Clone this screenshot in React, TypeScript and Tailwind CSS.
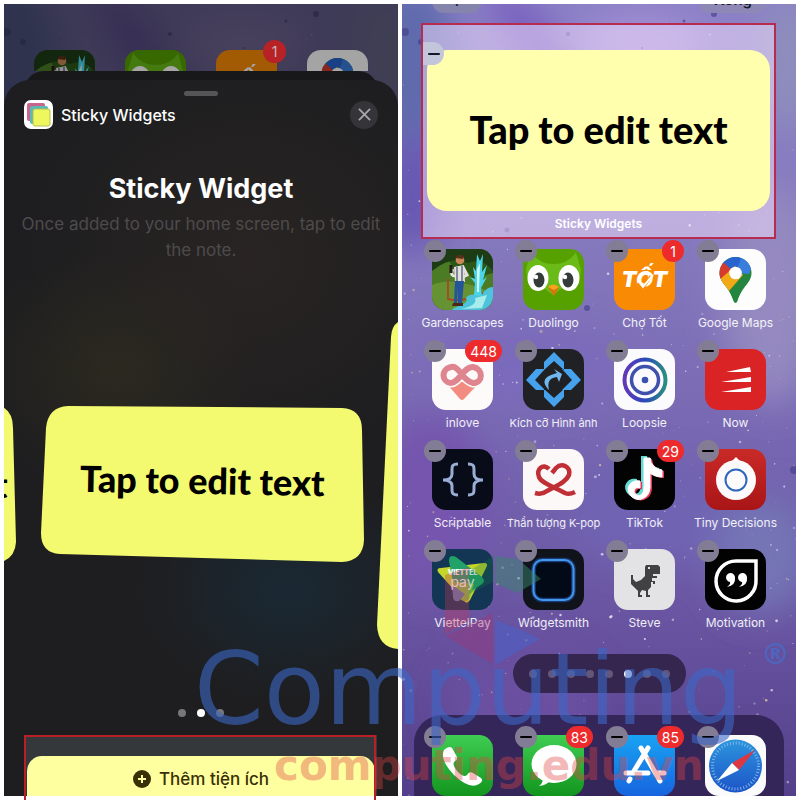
import type { ReactNode } from "react";

type AppInfo = { name: string; icon: ReactNode; badge?: string; small?: boolean };

const note = "Tap to edit text";

function seeded(seed: number) {
  let s = seed;
  return () => {
    s = (s * 16807) % 2147483647;
    return s / 2147483647;
  };
}

const random = seeded(77);
const stars = Array.from({ length: 420 }, () => {
  const y = Math.pow(random(), 0.65) * 792;
  return { x: random() * 394, y, r: 0.4 + random() * random() * 1.4, o: 0.3 + random() * 0.6 };
});
const specks = [
  [3, 28, 4], [19, 38, 3], [166, 30, 2], [312, 10, 3], [282, 17, 1.5], [105, 226, 2.5], [185, 304, 3], [392, 466, 4], [240, 44, 1],
];

function Wallpaper() {
  return (
    <svg aria-hidden="true" className="absolute inset-0 h-full w-full" viewBox="0 0 394 792" preserveAspectRatio="none">
      <defs>
        <linearGradient id="sky" x1="0" y1="0" x2="0" y2="1">
          <stop offset="0" stopColor="#8b80c6" />
          <stop offset=".3" stopColor="#8579bd" />
          <stop offset=".55" stopColor="#7767b2" />
          <stop offset=".8" stopColor="#67529f" />
          <stop offset="1" stopColor="#543f8a" />
        </linearGradient>
        <filter id="haze" x="-50%" y="-50%" width="200%" height="200%"><feGaussianBlur stdDeviation="18" /></filter>
      </defs>
      <rect width="394" height="792" fill="url(#sky)" />
      <g filter="url(#haze)">
        <ellipse cx="10" cy="60" rx="45" ry="90" fill="#5e6aac" />
        <ellipse cx="140" cy="50" rx="18" ry="90" fill="#7559bd" transform="rotate(-35 140 50)" />
        <ellipse cx="10" cy="190" rx="35" ry="60" fill="#6656b2" />
        <ellipse cx="240" cy="40" rx="60" ry="25" fill="#a993d9" />
        <ellipse cx="370" cy="290" rx="50" ry="110" fill="#9489c0" />
        <ellipse cx="385" cy="60" rx="25" ry="70" fill="#8f90bb" />
        <ellipse cx="120" cy="360" rx="100" ry="40" fill="#7a6bbb" />
        <ellipse cx="30" cy="500" rx="60" ry="90" fill="#7554ad" />
        <ellipse cx="250" cy="510" rx="90" ry="50" fill="#7063b2" />
        <ellipse cx="360" cy="550" rx="50" ry="60" fill="#7474b6" />
        <ellipse cx="120" cy="700" rx="80" ry="60" fill="#6a4fa0" />
      </g>
      {specks.map(([x, y, r]) => <circle key={x} cx={x} cy={y} r={r} fill="#3f3a8b" opacity=".6" />)}
      {stars.map((s, i) => <circle key={i} cx={s.x} cy={s.y} r={s.r} fill={i % 5 ? "#e6dff5" : "#d9c5a4"} opacity={s.o} />)}
    </svg>
  );
}

const Garden = () => (
  <svg viewBox="0 0 61 61" className="h-full w-full">
    <rect width="61" height="61" fill="#2c5719" />
    <path d="M0 14Q16 2 22 22Q32 12 40 30L61 24V61H0Z" fill="#4b7b24" />
    <path d="M0 0H61V22Q50 8 36 14Q20 6 0 22Z" fill="#1d3c15" />
    <path d="M0 36Q20 26 61 44V61H0Z" fill="#659233" />
    <path d="M16 30V50Q30 54 50 44Q57 50 46 57" fill="none" stroke="#b33c22" strokeWidth="1.6" />
    <path d="M22 59Q38 53 34 50Q34 44 50 46Q54 38 61 38V61H20Z" fill="#4cc5dc" />
    <path d="M28 60Q46 57 43 49L55 46L50 59Z" fill="#a8ecec" />
    <path d="M42 46L43 34L38 28L43 30L41 18L44 22L45 5L48 12L51 5L50 23L55 16L51 31L55 28L49 39L50 47Z" fill="#4bd5e8" />
    <path d="M45 43L45 20L48 14L47 43Z" fill="#cafafa" />
    <circle cx="28" cy="11" r="4.3" fill="#c98758" />
    <path d="M23 9Q25 4 32 7L31 10Z" fill="#593018" />
    <path d="M22 18L32 16L33 33H23Z" fill="#e4e0dc" />
    <path d="M21 20Q17 28 25 27M31 18L35 26L29 29" fill="none" stroke="#e4e0dc" strokeWidth="3" />
    <path d="M25 18V32M30 17V32" stroke="#536382" strokeWidth="1.4" />
    <path d="M23 32H32L30 54H26V38L25 54H22Z" fill="#25549b" />
    <path d="M21 54H31V57H20Z" fill="#4d2816" />
    <path d="M19 16V24" stroke="#241c16" strokeWidth="3" />
  </svg>
);
const Owl = () => (
  <svg viewBox="0 0 61 61" className="h-full w-full">
    <rect width="61" height="61" fill="#56a000" />
    <path d="M8 3Q16 15 30 15Q46 15 53 3L58 21Q58 34 42 37L30 46L18 37Q3 34 3 20Z" fill="#6abb18" />
    <ellipse cx="15" cy="29" rx="10.5" ry="13" fill="#fff" /><ellipse cx="46" cy="29" rx="10.5" ry="13" fill="#fff" />
    <ellipse cx="16" cy="31" rx="5.5" ry="7.5" fill="#353b38" /><ellipse cx="45" cy="31" rx="5.5" ry="7.5" fill="#353b38" />
    <circle cx="13" cy="28" r="2.2" fill="#fff" /><circle cx="42" cy="28" r="2.2" fill="#fff" />
    <path d="M25 38Q30 34 36 38L31 47Z" fill="#df730b" /><path d="M25 38Q30 33 36 38L31 41Z" fill="#f7a51d" />
  </svg>
);
const Tot = () => (
  <div className="relative flex h-full w-full items-center justify-center bg-[#f98b04] font-[Inter] text-[22px] font-black text-white italic">
    <span>TỐT</span>
    <svg viewBox="0 0 61 61" className="absolute inset-0"><path d="M24 34L29 39L37 27" fill="none" stroke="#f98b04" strokeWidth="3" /><path d="M25 33L29 38L39 26" fill="none" stroke="#fff" strokeWidth="2" /></svg>
  </div>
);
const Maps = () => (
  <svg viewBox="0 0 61 61" className="h-full w-full">
    <defs><clipPath id="pin"><path d="M30.500 8A16 16 0 0 1 46.500 24C46.500 34 37 37 32.500 52Q30.500 56 28.500 52C24 37 14.500 34 14.500 24A16 16 0 0 1 30.500 8Z" /></clipPath></defs>
    <rect width="61" height="61" fill="#fdfdfd" />
    <g clipPath="url(#pin)"><rect width="61" height="61" fill="#24853f" /><path d="M10 4H44L48 16L30 24L16 15Z" fill="#2864ce" /><path d="M9 10L18 13L30 24L18 37L10 30Z" fill="#d43b2d" /><path d="M12 33L30 17L38 26L23 43Z" fill="#f2a916" /><path d="M37 6L48 15L44 25L31 24Z" fill="#397edc" /></g>
    <circle cx="30.500" cy="24" r="6.300" fill="#fff" />
  </svg>
);
const Inlove = () => (
  <svg viewBox="0 0 61 61" className="h-full w-full">
    <rect width="61" height="61" fill="#fdfafa" />
    <path d="M14 34Q20 38 30 28Q43 39 47 34L32 50Q30 52 28 50Z" fill="#f28c80" />
    <path d="M30 26C25 18 22 17 19 18C9 20 9 33 19 34C27 34 32 17 41 18C52 20 51 34 41 34C36 33 34 30 30 26" fill="none" stroke="#fdfafa" strokeWidth="9" />
    <path d="M30 26C25 18 22 17 19 18C9 20 9 33 19 34C27 34 32 17 41 18C52 20 51 34 41 34C36 33 34 30 30 26" fill="none" stroke="#df8590" strokeWidth="6" />
  </svg>
);
const Resize = () => (
  <svg viewBox="0 0 61 61" className="h-full w-full">
    <rect width="61" height="61" fill="#202124" />
    <path d="M31 3L41 13V21L31 12L21 21V13ZM31 58L41 48V40L31 49L21 40V48ZM3 31L13 20H22L12 31L22 41H13ZM58 31L48 20H39L49 31L39 41H48Z" fill="#46a2ed" />
    <path d="M26 41Q16 31 28 26L34 24L31 20L39 25L36 33L34 28Q23 29 26 41Z" fill="#6fb7ee" />
  </svg>
);
const Loopsie = () => (
  <svg viewBox="0 0 61 61" className="h-full w-full">
    <defs><linearGradient id="loop"><stop stopColor="#6238b9" /><stop offset=".5" stopColor="#2c48ba" /><stop offset="1" stopColor="#2a8d82" /></linearGradient></defs>
    <rect width="61" height="61" fill="#fbfbfe" />
    <circle cx="31" cy="31" r="20.500" fill="none" stroke="url(#loop)" strokeWidth="4" /><circle cx="31" cy="31" r="13.500" fill="none" stroke="#4050ae" strokeWidth="3.500" /><circle cx="31" cy="31" r="3.300" fill="#3953ad" />
  </svg>
);
const Now = () => (
  <svg viewBox="0 0 61 61" className="h-full w-full"><rect width="61" height="61" fill="#d92324" /><path d="M21 23L45 18L46 23ZM16 33L46 28V33ZM16 43L46 38V43Z" fill="#fff" /></svg>
);
const Script = () => (
  <svg viewBox="0 0 61 61" className="h-full w-full">
    <rect width="61" height="61" fill="#080b18" />
    <path d="M26 15C19 15 20 18 20 25C20 30 16 31 11 31C16 31 20 32 20 37C20 43 19 46 26 46M36 15C43 15 42 18 42 25C42 30 46 31 51 31C46 31 42 32 42 37C42 43 43 46 36 46" fill="none" stroke="#9aaed5" strokeWidth="3" />
  </svg>
);
const Kpop = () => (
  <svg viewBox="0 0 61 61" className="h-full w-full">
    <rect width="61" height="61" fill="#fcf8f8" />
    <path d="M26 20C20 14 13 20 16 28C18 34 33 39 42 44Q46 46 52 43M12 44Q19 46 24 42C35 36 43 33 46 26C48 18 39 13 33 19L29 24" fill="none" stroke="#c12f36" strokeWidth="4.500" />
  </svg>
);
const TikTok = () => {
  const d = "M35 8V37C35 49 22 53 16 46C9 38 16 29 25 31V38C19 36 17 43 22 45C26 47 29 43 29 37V8H35Q36 18 47 20V27Q39 27 34 22";
  return (
    <svg viewBox="0 0 61 61" className="h-full w-full"><rect width="61" height="61" fill="#030303" /><path d={d} transform="translate(-2 -1)" fill="#65d9d3" /><path d={d} transform="translate(3 2)" fill="#e53657" /><path d={d} transform="translate(1 1)" fill="#fff" stroke="#fff" /></svg>
  );
};
const Tiny = () => (
  <svg viewBox="0 0 61 61" className="h-full w-full">
    <defs><linearGradient id="tiny" x2="0" y2="1"><stop stopColor="#c92a27" /><stop offset="1" stopColor="#a91517" /></linearGradient></defs>
    <rect width="61" height="61" fill="url(#tiny)" /><path d="M25 14L31 8L37 14" fill="#fff" /><circle cx="31" cy="31" r="20" fill="#fcfafa" /><circle cx="31" cy="31" r="10.500" fill="none" stroke="#2d68bd" strokeWidth="2" />
  </svg>
);
const Viettel = () => (
  <div className="relative h-full w-full bg-[#123654]">
    <svg viewBox="0 0 61 61" className="absolute inset-0">
      <path d="M6 23Q4 19 9 19L52 14Q57 14 54 19L38 51Q35 56 32 52Z" fill="#c4d62a" />
      <path d="M17 12Q17 5 24 8L50 28Q54 32 50 35L31 48L24 49Z" fill="#22a269" />
      <path d="M20 32L42 35L38 49Q34 54 29 51Z" fill="#84bd41" /><path d="M20 36L33 45L27 52Q21 53 21 48Z" fill="#5e7cab" />
    </svg>
    <div className="relative pt-[20px] text-center font-[Inter] text-[7px] leading-[7px] font-black text-white">VIETTEL</div>
    <div className="relative text-center font-[Inter] text-[14px] leading-[11px] text-white">pay</div>
  </div>
);
const Smith = () => (
  <svg viewBox="0 0 61 61" className="h-full w-full"><rect width="61" height="61" fill="#101319" /><rect x="10.500" y="11" width="40" height="40" rx="9" fill="#030a17" stroke="#163a77" strokeWidth="4.500" /><rect x="10.500" y="11" width="40" height="40" rx="9" fill="none" stroke="#4597ec" strokeWidth="2" /></svg>
);
const Dino = () => (
  <svg viewBox="0 0 61 61" className="h-full w-full">
    <rect width="61" height="61" fill="#e3e2e4" />
    <path d="M32 16H44L46 18V25H39V27H43V29H38V32H41V35H39V33H37V38L34 41V46H36V48H32V42L28 41L26 44V46H28V48H24V42L20 38L17 35V26H19V30L22 33L27 31L31 27V18Z" fill="#414143" /><rect x="34" y="18" width="2" height="2" fill="#e3e2e4" />
  </svg>
);
const Motivation = () => (
  <svg viewBox="0 0 61 61" className="h-full w-full">
    <rect width="61" height="61" fill="#020202" /><path d="M31 12H51V31A20 20 0 1 1 31 12Z" fill="none" stroke="#fff" strokeWidth="3.500" />
    <path d="M30 29A4.500 4.500 0 1 0 25 33Q26 35 22 38Q31 36 30 29ZM42 29A4.500 4.500 0 1 0 37 33Q38 35 34 38Q43 36 42 29Z" fill="#fff" />
  </svg>
);
const Phone = () => (
  <svg viewBox="0 0 61 61" className="h-full w-full">
    <defs><linearGradient id="green" x2="0" y2="1"><stop stopColor="#3fcd52" /><stop offset="1" stopColor="#12951e" /></linearGradient></defs>
    <rect width="61" height="61" fill="url(#green)" /><path d="M12 15Q17 10 20 13L25 22Q26 25 22 27Q20 30 26 37Q32 43 35 40Q37 36 41 38L49 43Q52 46 47 49Q38 55 22 40Q7 24 12 15Z" fill="#fff" />
  </svg>
);
const Messages = () => (
  <svg viewBox="0 0 61 61" className="h-full w-full"><rect width="61" height="61" fill="url(#green)" /><ellipse cx="31" cy="29" rx="22.500" ry="19" fill="#fff" /><path d="M19 42Q21 48 16 51Q25 50 28 44Z" fill="#fff" /></svg>
);
const Store = () => (
  <svg viewBox="0 0 61 61" className="h-full w-full">
    <defs><linearGradient id="store" x2="0" y2="1"><stop stopColor="#18a3f3" /><stop offset="1" stopColor="#1764de" /></linearGradient></defs>
    <rect width="61" height="61" fill="url(#store)" /><path d="M34 13L20 36M16 44L15 46M27 13L46 46M12 38H34M43 38H50" stroke="#fff" strokeWidth="5" strokeLinecap="round" />
  </svg>
);
const Safari = () => (
  <svg viewBox="0 0 61 61" className="h-full w-full">
    <defs><linearGradient id="safari" x2="0" y2="1"><stop stopColor="#2c95dd" /><stop offset="1" stopColor="#1d54c8" /></linearGradient></defs>
    <rect width="61" height="61" fill="#fbfbfb" /><circle cx="30.500" cy="31" r="26.500" fill="url(#safari)" />
    <circle cx="30.500" cy="31" r="23" fill="none" stroke="#7fb5e8" strokeWidth="3" strokeDasharray="1 2" />
    <path d="M50 15L34 35L27 28Z" fill="#df3740" /><path d="M27 28L34 35L12 46Z" fill="#fff" />
  </svg>
);

const apps: AppInfo[] = [
  { name: "Gardenscapes", icon: <Garden /> },
  { name: "Duolingo", icon: <Owl /> },
  { name: "Chợ Tốt", icon: <Tot />, badge: "1" },
  { name: "Google Maps", icon: <Maps /> },
  { name: "inlove", icon: <Inlove />, badge: "448" },
  { name: "Kích cỡ Hình ảnh", icon: <Resize />, small: true },
  { name: "Loopsie", icon: <Loopsie /> },
  { name: "Now", icon: <Now /> },
  { name: "Scriptable", icon: <Script /> },
  { name: "Thần tượng K-pop", icon: <Kpop />, small: true },
  { name: "TikTok", icon: <TikTok />, badge: "29" },
  { name: "Tiny Decisions", icon: <Tiny /> },
  { name: "ViettelPay", icon: <Viettel /> },
  { name: "Widgetsmith", icon: <Smith /> },
  { name: "Steve", icon: <Dino /> },
  { name: "Motivation", icon: <Motivation /> },
];

const dock: AppInfo[] = [
  { name: "Phone", icon: <Phone /> },
  { name: "Messages", icon: <Messages />, badge: "83" },
  { name: "App Store", icon: <Store />, badge: "85" },
  { name: "Safari", icon: <Safari /> },
];

function Minus() {
  return (
    <button aria-label="Remove" className="absolute -top-[9px] -left-2 flex size-[22px] items-center justify-center rounded-full bg-[#827d94]">
      <span className="h-[2px] w-3 rounded-full bg-black" />
    </button>
  );
}

function AppIcon({ app }: { app: AppInfo }) {
  return (
    <div className="relative size-[61px]">
      <button aria-label={app.name} className="block size-[61px] overflow-hidden rounded-[14px]">{app.icon}</button>
      <Minus />
      {app.badge && (
        <span className="absolute -top-[9px] -right-[9px] flex h-[22px] min-w-[22px] items-center justify-center rounded-full bg-[#ee2b2c] px-[5px] text-[14px] text-white">{app.badge}</span>
      )}
    </div>
  );
}

function NoteCard({ shape, className, textClass, text = true }: { shape: ReactNode; className: string; textClass?: string; text?: boolean }) {
  return (
    <div className={`relative flex shrink-0 items-center ${className}`}>
      {shape}
      {text && <p className={`relative font-[Lato] text-[36px] leading-none font-black whitespace-nowrap text-black ${textClass}`}>{note}</p>}
    </div>
  );
}

function Gallery() {
  return (
    <section className="relative mt-1 ml-1 h-[calc(100vh-8px)] overflow-hidden bg-[#37375a]">
      <div className="absolute inset-0"><Wallpaper /></div>
      <div className="absolute inset-0 bg-[#16161b]/65" />
      <div className="relative flex h-[67px] justify-between overflow-hidden px-[30px] pt-[46px]">
        {apps.slice(0, 4).map((app) => (
          <div key={app.name} className="relative size-[61px]">
            <div className="size-[61px] overflow-hidden rounded-[14px] brightness-65">{app.icon}</div>
            {app.badge && <span className="absolute -top-[10px] -right-[9px] flex size-[23px] items-center justify-center rounded-full bg-[#b82227] text-[14px] text-[#c7b8b8]">{app.badge}</span>}
          </div>
        ))}
      </div>
      <div className="relative mx-5 h-8 rounded-t-[20px] bg-[#18181a]" />
      <div className="relative -mt-[23px] flex h-full flex-col rounded-t-[26px] bg-[#1e1e20] bg-[radial-gradient(ellipse_150px_110px_at_72%_510px,#1a2934,transparent),radial-gradient(ellipse_140px_120px_at_28%_290px,#2b291f,transparent),radial-gradient(ellipse_220px_200px_at_62%_180px,#292423,transparent)]">
        <div className="mx-auto mt-[11px] h-[5px] w-[34px] rounded-full bg-[#555557]" />
        <header className="mt-1 flex h-[29px] items-center px-5">
          <svg viewBox="0 0 29 29" className="size-[29px]">
            <rect width="29" height="29" rx="7" fill="#fff" /><rect x="3" y="3" width="18" height="18" rx="2" fill="#c9648a" /><rect x="6" y="6" width="18" height="18" rx="2" fill="#5abab7" /><rect x="9" y="9" width="17" height="17" rx="2" fill="#eff75e" stroke="#b5bd53" />
          </svg>
          <h2 className="ml-2 text-[16px] font-medium text-white">Sticky Widgets</h2>
          <button aria-label="Close" className="ml-auto flex size-7 items-center justify-center rounded-full bg-[#353539]">
            <svg viewBox="0 0 14 14" className="size-[13px]"><path d="M1 1L13 13M13 1L1 13" stroke="#a6a6aa" strokeWidth="2" /></svg>
          </button>
        </header>
        <h1 className="mt-[42px] text-center text-[27px] leading-9 font-bold text-white">Sticky Widget</h1>
        <p className="mx-auto mt-1 max-w-[370px] text-center text-[17px] leading-[26px] text-[#4e4b4c]">Once added to your home screen, tap to edit the note.</p>
        <div className="mt-[56px] flex h-[330px] items-center justify-center gap-3">
          <NoteCard className="mr-3 h-[160px] w-[310px] justify-end" textClass="pr-2 pb-1 rotate-1"
            shape={<svg viewBox="0 0 310 160" className="absolute inset-0"><path d="M20 0H284Q307 1 307 24L310 138Q309 158 286 160H20Z" fill="#f3fa6f" /></svg>} />
          <NoteCard className="h-[156px] w-[324px] justify-center" textClass="pb-2 rotate-1"
            shape={<svg viewBox="0 0 324 156" className="absolute inset-0"><path d="M28 0L302 2Q322 3 322 24L324 134Q323 155 302 156L20 148Q1 147 1 127L6 22Q8 1 28 0Z" fill="#f3fa6f" /></svg>} />
          <NoteCard className="h-[330px] w-[320px]" text={false}
            shape={<svg viewBox="0 0 320 330" className="absolute inset-0"><path d="M320 0H32Q16 1 15 18L1 306Q2 329 23 330H320Z" fill="#f3fa6f" /></svg>} />
        </div>
        <div className="mt-[60px] flex justify-center gap-[11px]">
          <span className="size-2 rounded-full bg-[#77777a]" /><span className="size-2 rounded-full bg-white" /><span className="size-2 rounded-full bg-[#77777a]" />
        </div>
        <div className="mx-[21px] mt-[18px] bg-[#34383a] px-[2px] pt-[21px]">
          <button className="flex h-[60px] w-full justify-center gap-2 rounded-[15px] bg-[#feff9f] pt-[10px] text-[17px] leading-[26px] font-medium text-[#393006]">
            <svg viewBox="0 0 18 18" className="mt-1 size-[18px]"><circle cx="9" cy="9" r="9" fill="#393006" /><path d="M9 5V13M5 9H13" stroke="#feff9f" strokeWidth="2" /></svg>
            Thêm tiện ích
          </button>
        </div>
      </div>
    </section>
  );
}

function HomeScreen() {
  return (
    <section className="relative mt-1 mr-1 h-[calc(100vh-8px)] overflow-hidden">
      <Wallpaper />
      <div className="relative flex h-[19px] items-start justify-between overflow-hidden pr-[28px] pl-[30px]">
        <button aria-label="Add widget" className="-mt-[15px] flex h-6 w-[50px] items-start justify-center rounded-full bg-[#8584ac] text-[16px] leading-6 font-semibold text-[#20203a]"><span>+</span></button>
        <button className="-mt-[17px] h-[26px] rounded-full bg-[#8d88b5] px-4 text-[15px] leading-[26px] font-semibold text-[#17172a]">Xong</button>
      </div>
      <div className="relative mr-5 ml-[19px] h-[216px] border-2 border-[#b82b50] bg-[#f5e4ff]/50 px-1 pt-[25px]">
        <div className="relative flex h-[161px] items-center justify-center rounded-[20px] bg-[#ffffae]">
          <p className="pb-1 font-[Lato] text-[38px] leading-none font-black whitespace-nowrap text-black">{note}</p>
          <button aria-label="Remove widget" className="absolute -top-[8px] -left-[4px] flex h-[23px] w-[21px] items-center justify-center rounded-r-full bg-[#c3c5da]"><span className="h-[2px] w-3 rounded-full bg-[#15152c]" /></button>
        </div>
        <p className="mt-[4px] text-center text-[12px] leading-[18px] font-semibold text-white">Sticky Widgets</p>
      </div>
      <div className="relative mt-[10px] grid grid-cols-[repeat(4,61px)] justify-between gap-y-[10px] px-[30px]">
        {apps.map((app) => (
          <div key={app.name} className="flex h-[90px] flex-col items-center">
            <AppIcon app={app} />
            <span className={`mt-[3px] leading-[20px] whitespace-nowrap text-white/90 ${app.small ? "text-[11px]" : "text-[12px]"}`}>{app.name}</span>
          </div>
        ))}
      </div>
      <div className="relative mx-auto mt-[15px] flex h-[39px] w-[173px] items-center justify-center gap-[11px] rounded-full bg-[#35264f]">
        {Array.from({ length: 8 }, (_, i) => <span key={i} className={`size-2 rounded-full ${i === 5 ? "bg-white" : "bg-[#625779]"}`} />)}
      </div>
      <div className="relative mx-3 mt-[22px] flex h-[110px] justify-between rounded-t-[28px] bg-[#35265a] px-[18px] pt-[20px]">
        {dock.map((app) => <AppIcon key={app.name} app={app} />)}
      </div>
    </section>
  );
}

export default function App() {
  return (
    <main className="relative grid h-screen grid-cols-2 gap-1 overflow-hidden bg-white font-[Inter,'Noto_Sans',sans-serif]">
      <Gallery />
      <HomeScreen />
      <div className="pointer-events-none absolute top-[735px] left-6 h-20 w-[352px] border-2 border-[#b91f27]" />
      <svg aria-hidden="true" viewBox="0 0 100 112" className="pointer-events-none absolute top-[555px] left-[442px] w-[100px]">
        <path d="M3 20L27 12V66L3 79Z" fill="#c53657" opacity=".35" /><path d="M27 16L51 1V27L27 39Z" fill="#167447" opacity=".3" />
        <path d="M53 1L76 4L99 24L75 38L53 28Z" fill="#39866c" opacity=".5" /><path d="M3 81L51 58V109Z" fill="#a03475" opacity=".4" /><path d="M53 65L75 73L98 84L53 110Z" fill="#4962c9" opacity=".55" />
      </svg>
      <p aria-hidden="true" className="pointer-events-none absolute top-[640px] left-[194px] font-['DejaVu_Sans'] text-[100px] leading-[100px] whitespace-nowrap text-[#3c68c6]/60">Computing</p>
      <p aria-hidden="true" className="pointer-events-none absolute top-[744px] left-[274px] font-['DejaVu_Sans'] text-[42px] leading-[44px] font-bold whitespace-nowrap text-[#e04545]/40">computing.edu.vn</p>
      <p aria-hidden="true" className="pointer-events-none absolute top-[636px] left-[761px] font-['DejaVu_Sans'] text-[29px] leading-9 font-bold text-[#466ecb]/70">®</p>
    </main>
  );
}
